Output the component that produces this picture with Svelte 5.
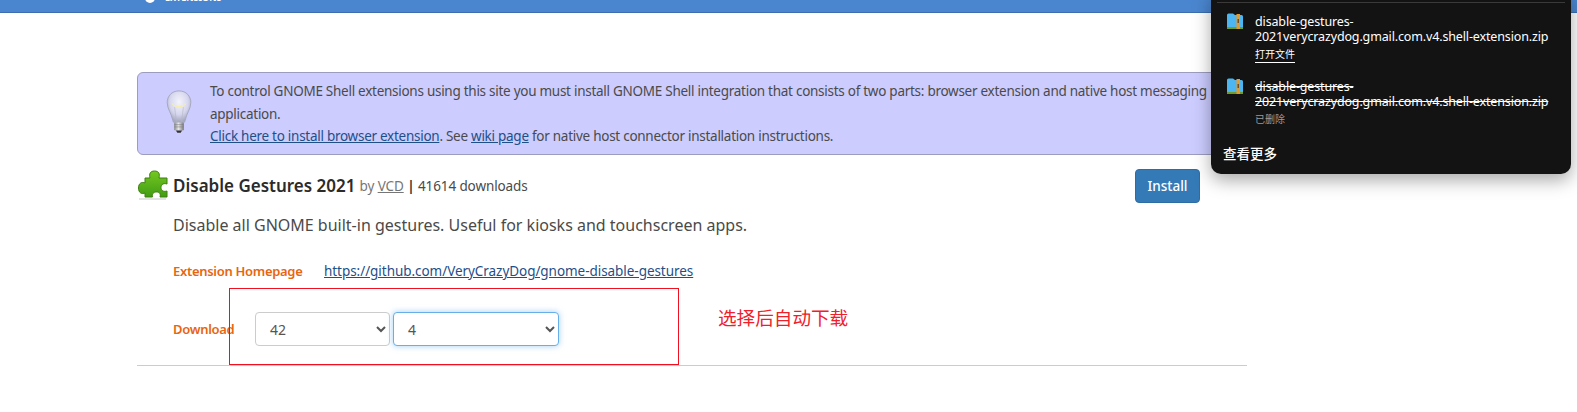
<script>
  let shell = $state('42');
  let version = $state('4');

  const downloads = [
    { name: 'disable-gestures-\n2021verycrazydog.gmail.com.v4.shell-extension.zip', action: '打开文件', removed: false },
    { name: 'disable-gestures-\n2021verycrazydog.gmail.com.v4.shell-extension.zip', action: '已删除', removed: true }
  ];
</script>

<header class="topbar">
  <div class="brand">
    <svg class="brand-logo" width="14" height="14" viewBox="0 0 14 14"><circle cx="7" cy="-2" r="5" fill="#fff" /></svg>
    <span class="brand-text">EXTENSIONS</span>
  </div>
</header>

<main class="page">
  <div class="notice">
    <svg class="bulb" width="28" height="45" viewBox="0 0 32 50" preserveAspectRatio="none">
      <defs>
        <radialGradient id="glass" cx="50%" cy="35%" r="60%">
          <stop offset="0" stop-color="#f4f4fa" />
          <stop offset="0.65" stop-color="#d5d6ee" />
          <stop offset="1" stop-color="#a9abc0" />
        </radialGradient>
        <linearGradient id="base" x1="0" x2="1" y1="0" y2="0">
          <stop offset="0" stop-color="#8a8a8a" />
          <stop offset="0.45" stop-color="#e6e6e6" />
          <stop offset="1" stop-color="#777" />
        </linearGradient>
      </defs>
      <path d="M16 1C7.5 1 2.5 7 2.5 14c0 7 5 12 6.5 20 .3 1.5 1 2.5 2 2.5h10c1 0 1.700-1 2-2.500C24.500 26 29.500 21 29.500 14 29.500 7 24.500 1 16 1z" fill="url(#glass)" stroke="#a3a5ba" />
      <path d="M8 15c2 3 5 3.500 8 3.500s6-.5 8-3.500" fill="none" stroke="#f5eeb0" stroke-width="1.200" />
      <path d="M13 35 11 19M19 35l2-16" fill="none" stroke="#b5b6c8" stroke-width="0.700" />
      <rect x="10.500" y="36" width="11" height="9" rx="1.500" fill="url(#base)" />
      <path d="M10.500 38.500h11M10.500 41h11" stroke="#777" stroke-width="0.600" />
      <path d="M12.500 45h7l-1.500 2.500h-4z" fill="#333" />
    </svg>
    <div class="notice-text">
      To control GNOME Shell extensions using this site you must install GNOME Shell integration that consists of two parts: browser extension and native host messaging application.<br />
      <a href="#install">Click here to install browser extension</a>. See <a href="#wiki">wiki page</a> for native host connector installation instructions.
    </div>
  </div>

  <div class="title-row">
    <svg class="puzzle" width="32" height="32" viewBox="0 0 32 32">
      <defs>
        <linearGradient id="green" x1="0" x2="0" y1="0" y2="1">
          <stop offset="0" stop-color="#74c823" />
          <stop offset="1" stop-color="#419c12" />
        </linearGradient>
      </defs>
      <path d="M8 9H13C12 5 13 2 17.500 2 22 2 23 5 22 9H30V15C27 14 24 15 24 18.500 24 22 27 23 30 22V28H23C24 25 22.500 23 19.500 23 16.500 23 14.500 25 15.500 28H8V24C5 25.500 1.500 24 1.500 19 1.500 14 5 12.500 8 14Z" fill="url(#green)" stroke="#3f7f10" />
      <path d="M2 30h27" stroke="#000" stroke-opacity="0.150" stroke-width="1.500" />
    </svg>
    <h3 class="title">Disable Gestures 2021</h3>
    <span class="by">by <a href="#vcd">VCD</a> <b>|</b> <span class="count">41614 downloads</span></span>
    <button class="install">Install</button>
  </div>

  <p class="description">Disable all GNOME built-in gestures. Useful for kiosks and touchscreen apps.</p>

  <div class="field homepage">
    <span class="label">Extension Homepage</span>
    <a href="#github">https://github.com/VeryCrazyDog/gnome-disable-gestures</a>
  </div>

  <div class="field download">
    <span class="label">Download</span>
    <select class="shell" bind:value={shell}>
      <option>42</option>
    </select>
    <select class="version" bind:value={version}>
      <option>4</option>
    </select>
  </div>

  <hr />
</main>

<div class="mark"></div>
<div class="mark-note">选择后自动下载</div>

<aside class="downloads">
  <div class="downloads-rule"></div>
  {#each downloads as item}
    <div class="item">
      <svg class="zip" width="16" height="16" viewBox="0 0 16 16">
        <path d="M0 2Q0 .5 1.500 .5H6L8 2H14.500Q16 2 16 3.500V14.500Q16 16 14.500 16H1.500Q0 16 0 14.500Z" fill="#4db5f0" />
        <rect x="0" y="14" width="16" height="2" fill="#6f9a2c" />
        <rect x="9.500" y="1" width="3.500" height="15" fill="#e39a2d" />
        <rect x="10.500" y="6" width="1.500" height="4" fill="#7a4a12" />
      </svg>
      <div class="item-body">
        <div class="item-name" class:removed={item.removed}>{item.name}</div>
        {#if item.removed}
          <div class="item-status">{item.action}</div>
        {:else}
          <a class="item-action" href="#open">{item.action}</a>
        {/if}
      </div>
    </div>
  {/each}
  <div class="more">查看更多</div>
</aside>

<style>
  :global(body) {
    margin: 0;
    background: #fff;
    overflow: hidden;
    font-family: "Noto Sans", "Noto Sans CJK SC", sans-serif;
  }

  .topbar {
    height: 12px;
    background: #4a86cf;
    border-bottom: 1px solid #3c6eb0;
    overflow: hidden;
  }

  .brand {
    display: flex;
    align-items: flex-start;
    gap: 8px;
    margin-left: 143px;
    height: 12px;
  }

  .brand-logo {
    display: block;
  }

  .brand-text {
    margin-top: -8px;
    margin-left: 0;
    color: #fff;
    font-size: 9px;
    font-weight: 700;
    line-height: 12px;
  }

  .page {
    width: 1110px;
    margin: 59px 0 0 137px;
    color: #4a4a4a;
    font-size: 13.500px;
  }

  a {
    color: #1f4f87;
    text-decoration: underline;
  }

  .notice {
    display: flex;
    height: 81px;
    background: #ccccff;
    border: 1px solid #9c9cbf;
    border-radius: 6px;
    padding: 0 0 0 27px;
    box-sizing: content-box;
    overflow: hidden;
  }

  .bulb {
    margin-top: 17px;
    flex: none;
  }

  .notice-text {
    margin: 0 0 0 17px;
    padding-top: 7px;
    line-height: 22.500px;
    width: 1030px;
    flex: none;
    letter-spacing: -0.27px;
  }

  .title-row {
    display: flex;
    align-items: center;
    height: 34px;
    margin-top: 13px;
  }

  .title {
    margin: 0 0 0 4px;
    font-size: 17px;
    font-weight: 600;
    color: #2b2b2b;
  }

  .by {
    margin-left: 4px;
    font-size: 13.500px;
    margin-top: 2px;
    color: #767676;
    letter-spacing: -0.1px;
  }

  .by a {
    color: #767676;
  }

  .by b {
    color: #333;
  }

  .count {
    color: #4a4a4a;
  }

  .install {
    margin-left: auto;
    margin-right: 47px;
    margin-top: 2px;
    width: 65px;
    height: 34px;
    background: #337ab7;
    color: #fff;
    border: 1px solid #2e6da4;
    border-radius: 4px;
    font: inherit;
    font-weight: 500;
  }

  .description {
    margin: 13px 0 0 36px;
    font-size: 16px;
    line-height: 20px;
  }

  .field {
    display: flex;
    align-items: center;
    margin-left: 36px;
  }

  .homepage {
    margin-top: 26px;
    height: 20px;
    letter-spacing: -0.05px;
  }

  .label {
    width: 151px;
    flex: none;
    color: #e8650f;
    font-size: 13px;
    font-weight: 600;
    letter-spacing: -0.3px;
  }

  .download {
    margin-top: 31px;
  }

  .download .label {
    width: 82px;
  }

  select {
    height: 34px;
    font: inherit;
    font-size: 14px;
    color: #555;
    background: #fff;
    border: 1px solid #ccc;
    border-radius: 4px;
    padding: 0 10px;
  }

  .shell {
    width: 135px;
  }

  .version {
    width: 166px;
    margin-left: 3px;
    border-color: #66afe9;
    box-shadow: 0 0 6px rgba(102, 175, 233, 0.6);
  }

  hr {
    margin: 19px 0 0;
    border: 0;
    border-top: 1px solid #ccc;
  }

  .mark {
    position: absolute;
    left: 229px;
    top: 288px;
    width: 448px;
    height: 75px;
    border: 1px solid #f01020;
  }

  .mark-note {
    position: absolute;
    left: 718px;
    top: 306px;
    color: #f0202a;
    font-size: 18.600px;
    line-height: 24px;
  }

  .downloads {
    position: absolute;
    left: 1211px;
    top: -8px;
    width: 360px;
    height: 182px;
    box-sizing: border-box;
    background: #131313;
    border-radius: 0 0 10px 10px;
    box-shadow: 0 6px 18px rgba(0, 0, 0, 0.35);
    color: #fff;
    font-size: 12.500px;
  }

  .downloads-rule {
    height: 1px;
    margin: 10px 6px 0;
    background: #3a3a3a;
  }

  .item {
    display: flex;
    padding: 0 0 0 16px;
    height: 65px;
  }

  .zip {
    flex: none;
    margin-top: 10px;
  }

  .item-body {
    margin-left: 12px;
    padding-top: 11px;
  }

  .item-name {
    white-space: pre-line;
    line-height: 15px;
    letter-spacing: -0.14px;
  }

  .item-name.removed {
    text-decoration: line-through;
  }

  .item-action {
    display: inline-block;
    margin-top: 3px;
    color: #fff;
    font-size: 10px;
    line-height: 15px;
    text-decoration: none;
    border-bottom: 1px solid #fff;
  }

  .item-status {
    margin-top: 3px;
    color: #9a9a9a;
    font-size: 10px;
    line-height: 15px;
  }

  .more {
    margin: 10px 0 0 12px;
    font-size: 13.500px;
    font-weight: 500;
  }
</style>
